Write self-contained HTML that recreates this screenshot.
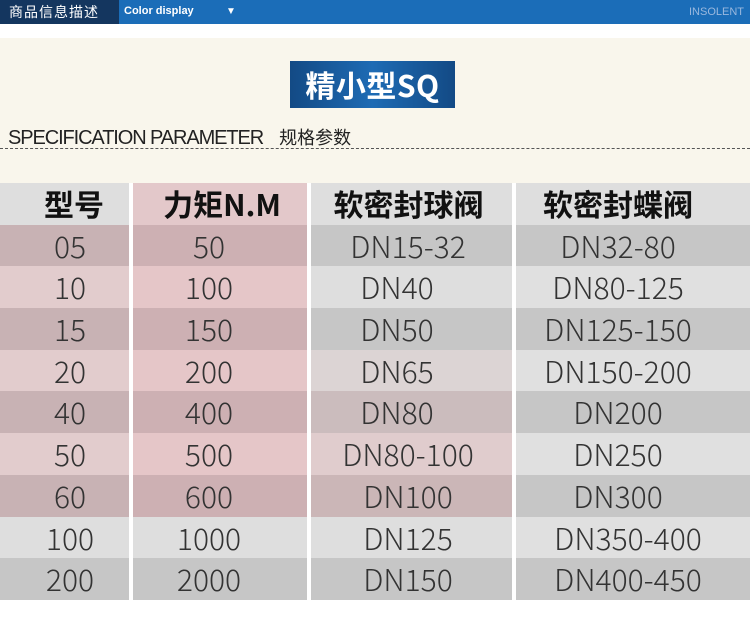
<!DOCTYPE html>
<html><head><meta charset="utf-8"><style>
*{margin:0;padding:0;box-sizing:border-box}
body{width:750px;height:639px;background:#fff;position:relative;overflow:hidden;font-family:"Liberation Sans","Noto Sans CJK SC",sans-serif}
.top{position:absolute;left:0;top:0;width:750px;height:24px;background:#1b6db8}
.top .l{position:absolute;left:0;top:0;width:119px;height:24px;background:#14365f;color:#fff;font-size:14px;line-height:24px;padding-left:9px;letter-spacing:1px;font-family:"Noto Sans CJK SC",sans-serif}
.top .c{position:absolute;left:124px;top:0;color:#fff;font-size:11px;font-weight:bold;line-height:22px}
.top .a{position:absolute;left:226px;top:0;color:#fff;font-size:10px;line-height:24px}
.top .r{position:absolute;right:6px;top:0;color:#9ab8de;font-size:11px;line-height:24px}
.cream{position:absolute;left:0;top:38px;width:750px;height:562px;background:#f9f6ec}
.title{position:absolute;left:290px;top:61px;width:165px;height:47px;background:linear-gradient(90deg,#134a85,#1e6bb4 50%,#134a85);color:#fff;font-family:"Noto Sans CJK SC",sans-serif;font-weight:bold;font-size:30px;line-height:47px;text-align:center;letter-spacing:0.5px}
.spec{position:absolute;left:8px;top:124px;font-size:20px;color:#222;letter-spacing:-1.1px;white-space:nowrap}
.spec span{font-family:"Noto Sans CJK SC",sans-serif;margin-left:16px;letter-spacing:0;font-size:18px}
.dash{position:absolute;left:0;top:148px;width:750px;border-top:1px dashed #555}
.tbl{position:absolute;left:0;top:183px;width:750px}
.row{position:relative;height:41.7px}
.cell{position:absolute;top:0;height:100%;text-align:center;font-family:"Noto Sans CJK SC",sans-serif;font-size:30px;color:#333;line-height:41.7px;font-weight:300}
.h .cell{font-weight:bold;color:#111;font-size:30px}
.c1{left:0;width:140px}.c2{left:133px;width:152px}.c3{left:311px;width:194px}.c4{left:516px;width:204px}
.bg{position:absolute;top:0;height:100%}
.b1{left:0;width:129px}.b2{left:133px;width:174px}.b3{left:311px;width:201px}.b4{left:516px;width:234px}
.sep{position:absolute;top:183px;width:4px;height:417px;background:#fff}
</style></head><body>
<div class="top"><div class="l">商品信息描述</div><div class="c">Color display</div><div class="a">▼</div><div class="r">INSOLENT</div></div>
<div class="cream"></div>
<div class="title">精小型SQ</div>
<div class="spec">SPECIFICATION PARAMETER<span>规格参数</span></div>
<div class="dash"></div>
<div class="tbl">
<div class="row h"><div class="bg b1" style="background:#dedede"></div><div class="bg b2" style="background:#e3c8ca"></div><div class="bg b3" style="background:#dedede"></div><div class="bg b4" style="background:#dedede"></div><div class="cell" style="left:4px;width:140px">型号</div><div class="cell" style="left:133px;width:178px">力矩N.M</div><div class="cell" style="left:311px;width:195px">软密封球阀</div><div class="cell" style="left:516px;width:204px">软密封蝶阀</div></div>
<div class="row"><div class="bg b1" style="background:#c8b2b4"></div><div class="bg b2" style="background:#cdb0b3"></div><div class="bg b3" style="background:#c6c6c6"></div><div class="bg b4" style="background:#c6c6c6"></div><div class="cell c1">05</div><div class="cell c2">50</div><div class="cell c3">DN15-32</div><div class="cell c4">DN32-80</div></div>
<div class="row"><div class="bg b1" style="background:#e2cccd"></div><div class="bg b2" style="background:#e5c6c8"></div><div class="bg b3" style="background:#dedede"></div><div class="bg b4" style="background:#e0e0e0"></div><div class="cell c1">10</div><div class="cell c2">100</div><div class="cell c3" style="left:300px">DN40</div><div class="cell c4">DN80-125</div></div>
<div class="row"><div class="bg b1" style="background:#c8b2b4"></div><div class="bg b2" style="background:#cdb0b3"></div><div class="bg b3" style="background:#c6c6c6"></div><div class="bg b4" style="background:#c6c6c6"></div><div class="cell c1">15</div><div class="cell c2">150</div><div class="cell c3" style="left:300px">DN50</div><div class="cell c4">DN125-150</div></div>
<div class="row"><div class="bg b1" style="background:#e2cccd"></div><div class="bg b2" style="background:#e5c6c8"></div><div class="bg b3" style="background:#dcd4d4"></div><div class="bg b4" style="background:#e0e0e0"></div><div class="cell c1">20</div><div class="cell c2">200</div><div class="cell c3" style="left:300px">DN65</div><div class="cell c4">DN150-200</div></div>
<div class="row"><div class="bg b1" style="background:#c8b2b4"></div><div class="bg b2" style="background:#cdb0b3"></div><div class="bg b3" style="background:#cbbcbd"></div><div class="bg b4" style="background:#c6c6c6"></div><div class="cell c1">40</div><div class="cell c2">400</div><div class="cell c3" style="left:300px">DN80</div><div class="cell c4">DN200</div></div>
<div class="row"><div class="bg b1" style="background:#e2cccd"></div><div class="bg b2" style="background:#e5c6c8"></div><div class="bg b3" style="background:#e0cccd"></div><div class="bg b4" style="background:#e0e0e0"></div><div class="cell c1">50</div><div class="cell c2">500</div><div class="cell c3">DN80-100</div><div class="cell c4">DN250</div></div>
<div class="row"><div class="bg b1" style="background:#c8b2b4"></div><div class="bg b2" style="background:#cdb0b3"></div><div class="bg b3" style="background:#cbb6b7"></div><div class="bg b4" style="background:#c6c6c6"></div><div class="cell c1">60</div><div class="cell c2">600</div><div class="cell c3">DN100</div><div class="cell c4">DN300</div></div>
<div class="row"><div class="bg b1" style="background:#dedede"></div><div class="bg b2" style="background:#dedede"></div><div class="bg b3" style="background:#dedede"></div><div class="bg b4" style="background:#e0e0e0"></div><div class="cell c1">100</div><div class="cell c2">1000</div><div class="cell c3">DN125</div><div class="cell c4" style="left:526px">DN350-400</div></div>
<div class="row"><div class="bg b1" style="background:#c6c6c6"></div><div class="bg b2" style="background:#c6c6c6"></div><div class="bg b3" style="background:#c6c6c6"></div><div class="bg b4" style="background:#c6c6c6"></div><div class="cell c1">200</div><div class="cell c2">2000</div><div class="cell c3">DN150</div><div class="cell c4" style="left:526px">DN400-450</div></div>
</div>
<div class="sep" style="left:129px"></div><div class="sep" style="left:307px"></div><div class="sep" style="left:512px"></div>
<div style="position:absolute;left:0;top:600px;width:750px;height:39px;background:#fff"></div>
</body></html>
